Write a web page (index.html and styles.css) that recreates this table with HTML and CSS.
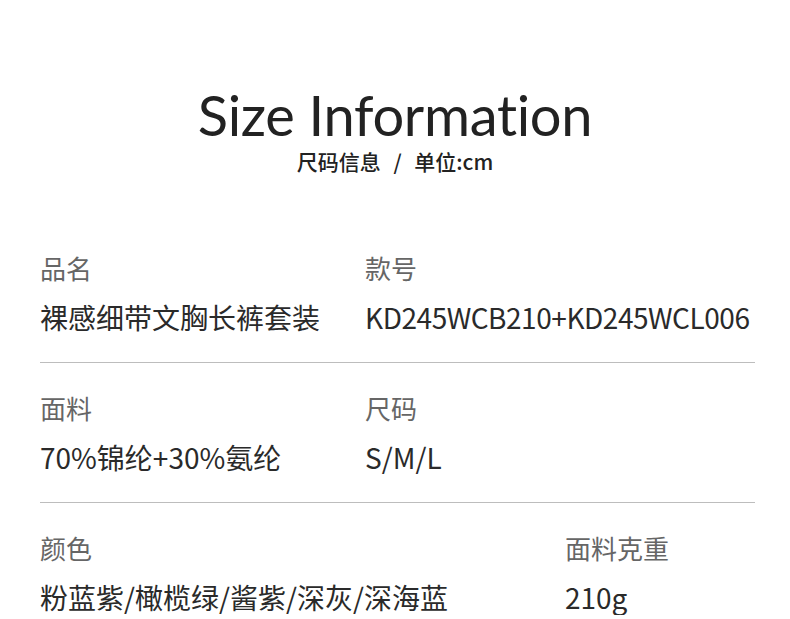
FILE: index.html
```html
<!DOCTYPE html>
<html lang="zh-CN">
<head>
    <meta charset="UTF-8">
    <meta name="viewport" content="width=device-width, initial-scale=1.0">
    <title>Size Information</title>
    <link rel="stylesheet" href="styles.css">
</head>
<body>
    <div class="header">
        <h1>Size Information</h1>
        <p class="sub">尺码信息 / 单位:cm</p>
    </div>

    <div class="info">
        <div class="row">
            <div class="cell">
                <div class="label">品名</div>
                <div class="value">裸感细带文胸长裤套装</div>
            </div>
            <div class="cell">
                <div class="label">款号</div>
                <div class="value code">KD245WCB210+KD245WCL006</div>
            </div>
        </div>
        <div class="row">
            <div class="cell">
                <div class="label">面料</div>
                <div class="value">70%锦纶+30%氨纶</div>
            </div>
            <div class="cell">
                <div class="label">尺码</div>
                <div class="value">S/M/L</div>
            </div>
        </div>
        <div class="row wide">
            <div class="cell">
                <div class="label">颜色</div>
                <div class="value">粉蓝紫/橄榄绿/酱紫/深灰/深海蓝</div>
            </div>
            <div class="cell">
                <div class="label">面料克重</div>
                <div class="value">210g</div>
            </div>
        </div>
    </div>
</body>
</html>
```

FILE: styles.css
```css
body {
    margin: 0;
    background-color: #ffffff;
    color: #222;
    font-family: "Noto Sans CJK SC", "Noto Sans", sans-serif;
}

.header {
    text-align: center;
    padding-top: 80px;
}

h1 {
    margin: 0;
    font-family: Lato, "DejaVu Sans", sans-serif;
    font-weight: 400;
    font-size: 56px;
    line-height: 70px;
    font-variant-ligatures: none;
    letter-spacing: -0.3px;
    color: #222;
}

.sub {
    margin: -3px 0 0;
    font-size: 21px;
    line-height: 28px;
    font-weight: 500;
    word-spacing: 8px;
    color: #222;
}

.info {
    margin: 75px 35px 0 40px;
}

.row {
    display: grid;
    grid-template-columns: 325px 1fr;
    padding: 0 0 27px;
    border-bottom: 1px solid #bdbdbd;
    margin-bottom: 27px;
}

.row.wide {
    grid-template-columns: 525px 1fr;
    border-bottom: none;
    padding-bottom: 0;
    margin-bottom: 0;
}

.label {
    font-size: 26px;
    line-height: 36px;
    color: #666;
}

.value {
    margin-top: 13px;
    font-size: 28px;
    line-height: 36px;
    color: #2a2a2a;
}

.code {
    letter-spacing: -0.45px;
}
```
